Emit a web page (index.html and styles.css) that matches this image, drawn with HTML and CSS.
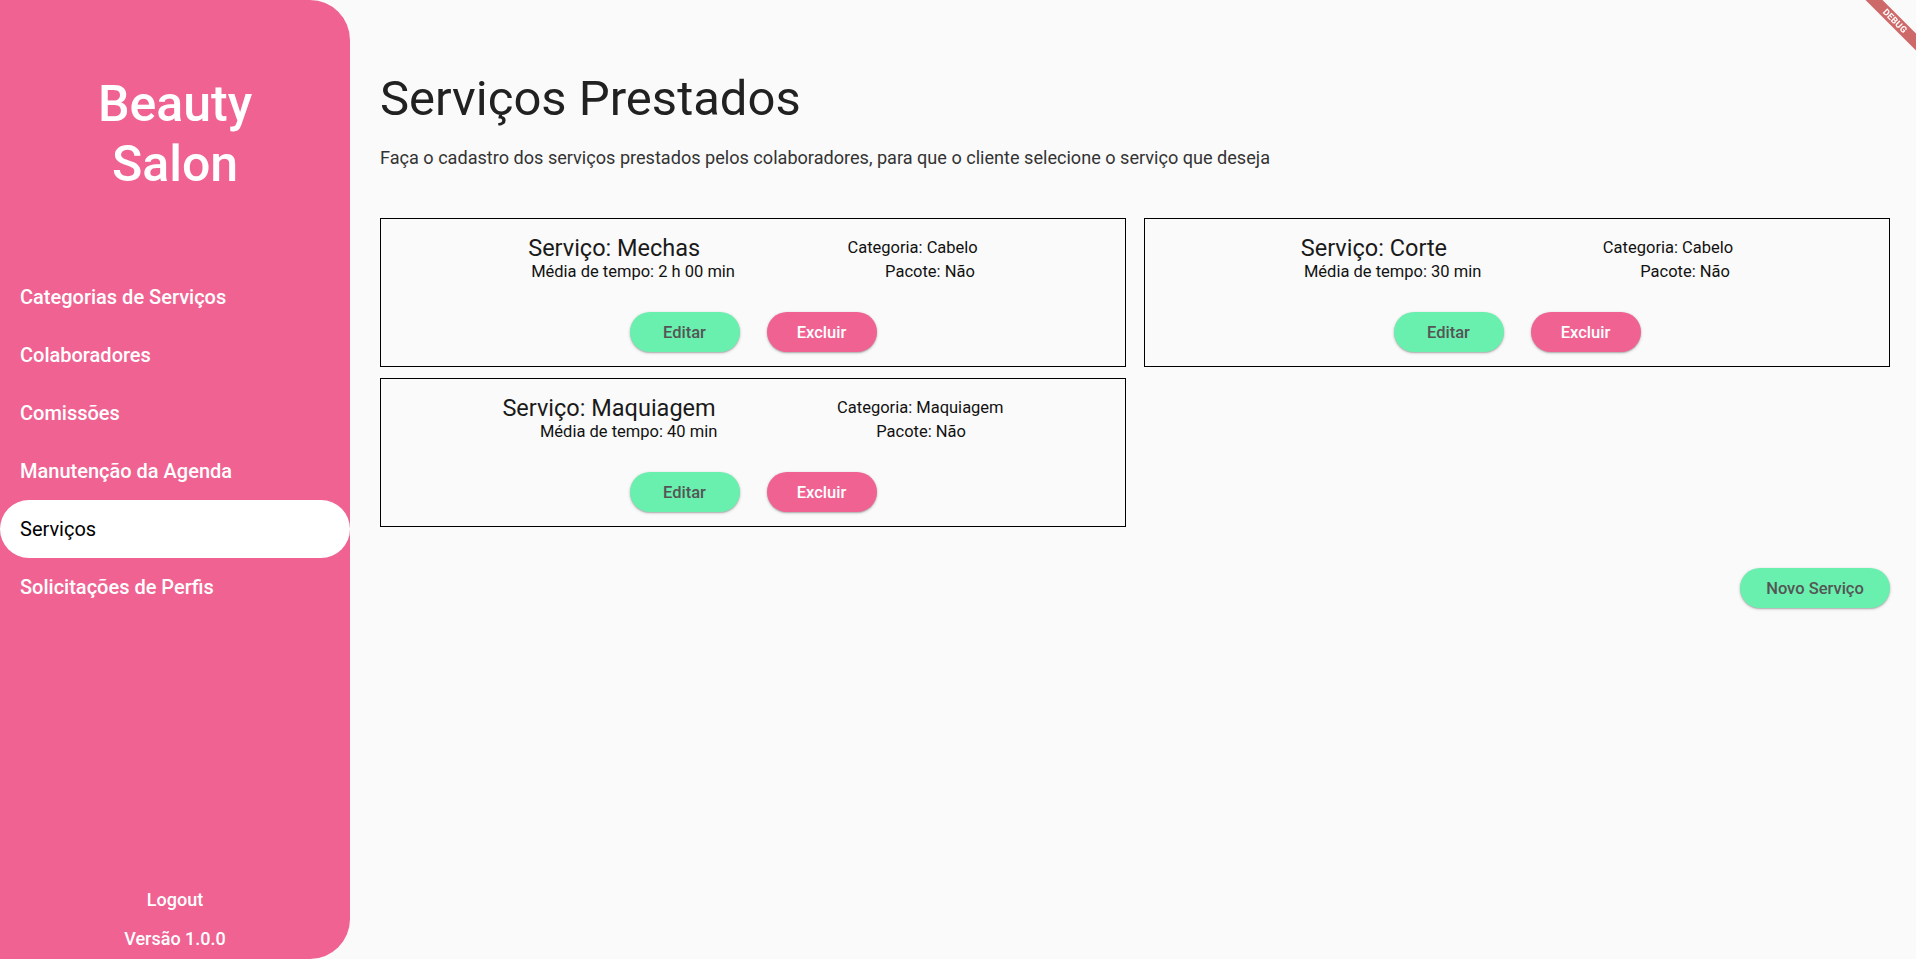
FILE: index.html
```html
<!DOCTYPE html>
<html lang="pt-BR">
<head>
<meta charset="utf-8">
<title>Beauty Salon - Serviços</title>
<link rel="stylesheet" href="styles.css">
</head>
<body>
<div class="app">
  <aside class="sidebar">
    <h1 class="brand">Beauty<br>Salon</h1>
    <nav class="nav">
      <a class="nav-item">Categorias de Serviços</a>
      <a class="nav-item">Colaboradores</a>
      <a class="nav-item">Comissões</a>
      <a class="nav-item">Manutenção da Agenda</a>
      <a class="nav-item active">Serviços</a>
      <a class="nav-item">Solicitações de Perfis</a>
    </nav>
    <div class="side-footer">
      <div class="logout">Logout</div>
      <div class="version">Versão 1.0.0</div>
    </div>
  </aside>
  <main class="main">
    <h2 class="page-title">Serviços Prestados</h2>
    <p class="subtitle">Faça o cadastro dos serviços prestados pelos colaboradores, para que o cliente selecione o serviço que deseja</p>
    <div class="cards">
      <div class="card">
        <div class="row">
          <span class="svc-name">Serviço: Mechas</span>
          <span class="svc-info">Categoria: Cabelo</span>
        </div>
        <div class="row">
          <span class="svc-info">Média de tempo: 2 h 00 min</span>
          <span class="svc-info">Pacote: Não</span>
        </div>
        <div class="btns">
          <button class="btn btn-green">Editar</button>
          <button class="btn btn-pink">Excluir</button>
        </div>
      </div>
      <div class="card">
        <div class="row">
          <span class="svc-name">Serviço: Corte</span>
          <span class="svc-info">Categoria: Cabelo</span>
        </div>
        <div class="row">
          <span class="svc-info">Média de tempo: 30 min</span>
          <span class="svc-info">Pacote: Não</span>
        </div>
        <div class="btns">
          <button class="btn btn-green">Editar</button>
          <button class="btn btn-pink">Excluir</button>
        </div>
      </div>
      <div class="card">
        <div class="row">
          <span class="svc-name">Serviço: Maquiagem</span>
          <span class="svc-info">Categoria: Maquiagem</span>
        </div>
        <div class="row">
          <span class="svc-info">Média de tempo: 40 min</span>
          <span class="svc-info">Pacote: Não</span>
        </div>
        <div class="btns">
          <button class="btn btn-green">Editar</button>
          <button class="btn btn-pink">Excluir</button>
        </div>
      </div>
    </div>
    <div class="actions">
      <button class="btn btn-green btn-new">Novo Serviço</button>
    </div>
  </main>
</div>
<div class="debug-wrap"><div class="debug">DEBUG</div></div>
</body>
</html>
```
FILE: styles.css
```css
* { box-sizing: border-box; }
html, body { margin: 0; padding: 0; }
body {
  font-family: Roboto, "Noto Sans", sans-serif;
  background: #fafafa;
  color: #212121;
  width: 1916px;
  height: 959px;
  overflow: hidden;
}
.app {
  display: flex;
  height: 959px;
}
.sidebar {
  width: 350px;
  flex: 0 0 350px;
  background: #f06292;
  border-radius: 0 40px 40px 0;
  display: flex;
  flex-direction: column;
  padding-top: 74px;
}
.brand {
  margin: 0;
  text-align: center;
  color: #fff;
  font-size: 50px;
  line-height: 60px;
  font-weight: 500;
}
.nav {
  margin-top: 74px;
  display: flex;
  flex-direction: column;
}
.nav-item {
  height: 58px;
  display: flex;
  align-items: center;
  padding-left: 20px;
  color: #fff;
  font-size: 20px;
  font-weight: 500;
  border-radius: 29px;
}
.nav-item.active {
  background: #fff;
  color: #000;
  font-weight: 400;
}
.side-footer {
  margin-top: auto;
  text-align: center;
  color: #fff;
  font-size: 18px;
  font-weight: 500;
}
.logout { height: 40px; line-height: 40px; }
.version { height: 39px; line-height: 38px; }
.main {
  flex: 1;
  padding: 71px 26px 0 30px;
}
.page-title {
  margin: 0;
  font-size: 49px;
  line-height: 56px;
  font-weight: 400;
  color: #212121;
}
.subtitle {
  margin: 20px 0 0;
  font-size: 18.1px;
  line-height: 22px;
  color: #333;
}
.cards {
  margin-top: 49px;
  display: grid;
  grid-template-columns: 1fr 1fr;
  column-gap: 18px;
  row-gap: 11px;
}
.card {
  border: 1px solid #000;
  height: 149px;
  padding-top: 15px;
}
.row {
  display: flex;
  justify-content: space-evenly;
  align-items: center;
}
.svc-name {
  font-size: 23.5px;
  line-height: 28px;
  color: #1a1a1a;
}
.svc-info {
  font-size: 16.5px;
  line-height: 20px;
  color: #111;
}
.btns {
  display: flex;
  justify-content: center;
  gap: 27px;
  margin-top: 30px;
}
.btn {
  border: none;
  height: 40px;
  width: 110px;
  border-radius: 20px;
  font-family: Roboto, "Noto Sans", sans-serif;
  font-size: 16.5px;
  font-weight: 500;
  padding: 0 16px;
  box-shadow: 0 1px 3px rgba(0,0,0,0.25), 0 1px 1px rgba(0,0,0,0.12);
}
.btn-green {
  background: #69f0ae;
  color: #555;
}
.btn-pink {
  background: #f06292;
  color: #fff;
}
.actions {
  display: flex;
  justify-content: flex-end;
  margin-top: 41px;
}
.btn-new {
  width: 150px;
}
.debug-wrap {
  position: fixed;
  top: 0;
  right: 0;
  width: 80px;
  height: 80px;
  overflow: hidden;
  pointer-events: none;
}
.debug {
  position: absolute;
  left: -1px;
  top: 15px;
  width: 120px;
  height: 12px;
  line-height: 12px;
  transform: rotate(45deg);
  background: rgba(183, 28, 28, 0.65);
  color: #fff;
  font-size: 9px;
  font-weight: 700;
  text-align: center;
  letter-spacing: 0.3px;
}
```
